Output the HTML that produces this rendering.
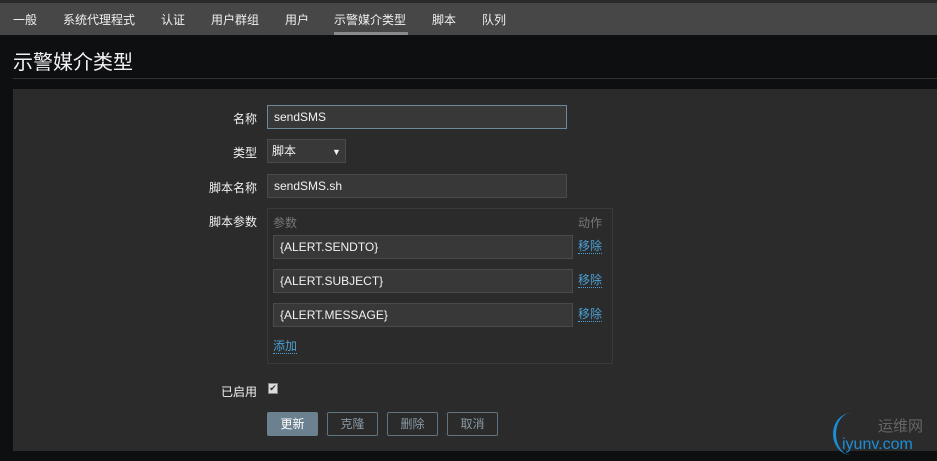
<!DOCTYPE html>
<html><head><meta charset="utf-8"><style>
*{box-sizing:border-box;margin:0;padding:0}
body{width:937px;height:461px;background:#0e0f11;font-family:"Liberation Sans","Noto Sans CJK SC",sans-serif;font-size:12px;color:#f2f2f2;position:relative;overflow:hidden}
.top{position:absolute;left:0;top:0;width:937px;height:3px;background:#2b2b2b}
.nav{position:absolute;left:0;top:3px;width:937px;height:32px;background:#474747}
.nav span{position:absolute;top:8px;font-size:12px;color:#f0f0f0}
.ul{position:absolute;left:334px;top:32px;width:74px;height:3px;background:#8a8a8a}
h1{position:absolute;left:13px;top:46px;font-size:20px;font-weight:normal;color:#f2f2f2}
.div{position:absolute;left:13px;top:78px;width:924px;height:1px;background:#333}
.panel{position:absolute;left:13px;top:89px;width:924px;height:362px;background:#2b2b2b}
.lbl{position:absolute;right:680px;font-size:12px;color:#f2f2f2}
.in{position:absolute;background:#383838;border:1px solid #4a4a4a;color:#f2f2f2;font-size:12px;padding:5px 6px;height:24px;line-height:12px}
.box{position:absolute;left:267px;top:208px;width:346px;height:156px;border:1px solid #3a3a3a}
.gr{position:absolute;color:#777;font-size:12px}
.lk{position:absolute;color:#4a9fd4;border-bottom:1px dotted #4a9fd4;line-height:13px}
.btn{position:absolute;top:412px;height:24px;width:51px;border:1px solid #5f7480;color:#8a9aa4;text-align:center;line-height:22px;border-radius:2px}
</style></head><body>
<div class="top"></div>
<div class="nav">
<span style="left:13px">一般</span><span style="left:63px">系统代理程式</span><span style="left:161px">认证</span><span style="left:211px">用户群组</span><span style="left:285px">用户</span><span style="left:334px">示警媒介类型</span><span style="left:432px">脚本</span><span style="left:482px">队列</span>
</div>
<div class="ul"></div>
<h1>示警媒介类型</h1>
<div class="div"></div>
<div class="panel"></div>
<div class="lbl" style="top:110px">名称</div>
<div class="in" style="left:267px;top:105px;width:300px;border-color:#6f8899">sendSMS</div>
<div class="lbl" style="top:144px">类型</div>
<div class="in" style="left:267px;top:139px;width:79px;padding-left:4px">脚本<span style="position:absolute;left:64px;top:6px;font-size:9px">▼</span></div>
<div class="lbl" style="top:179px">脚本名称</div>
<div class="in" style="left:267px;top:174px;width:300px">sendSMS.sh</div>
<div class="lbl" style="top:213px">脚本参数</div>
<div class="box"></div>
<div class="gr" style="left:273px;top:214px">参数</div>
<div class="gr" style="left:578px;top:214px">动作</div>
<div class="in" style="left:273px;top:235px;width:300px">{ALERT.SENDTO}</div>
<div class="lk" style="left:578px;top:240px">移除</div>
<div class="in" style="left:273px;top:269px;width:300px">{ALERT.SUBJECT}</div>
<div class="lk" style="left:578px;top:274px">移除</div>
<div class="in" style="left:273px;top:303px;width:300px">{ALERT.MESSAGE}</div>
<div class="lk" style="left:578px;top:308px">移除</div>
<div class="lk" style="left:273px;top:340px">添加</div>
<div class="lbl" style="top:383px">已启用</div>
<div style="position:absolute;left:268px;top:383px;width:10px;height:11px;background:#ddd;border:1px solid #888;font-size:9px;color:#333;line-height:9px;text-align:center">✔</div>
<div class="btn" style="left:267px;background:#6b818f;color:#fff;border-color:#6b818f">更新</div>
<div class="btn" style="left:327px">克隆</div>
<div class="btn" style="left:387px">删除</div>
<div class="btn" style="left:447px">取消</div>
<div style="position:absolute;left:833px;top:413px;width:36px;height:42px;border-left:3px solid #1a8fd8;border-radius:50%"></div>
<div style="position:absolute;left:878px;top:415px;color:#666;font-size:15px">运维网</div>
<div style="position:absolute;left:842px;top:436px;color:#1a8fd8;font-size:16px">iyunv.com</div>
</body></html>
